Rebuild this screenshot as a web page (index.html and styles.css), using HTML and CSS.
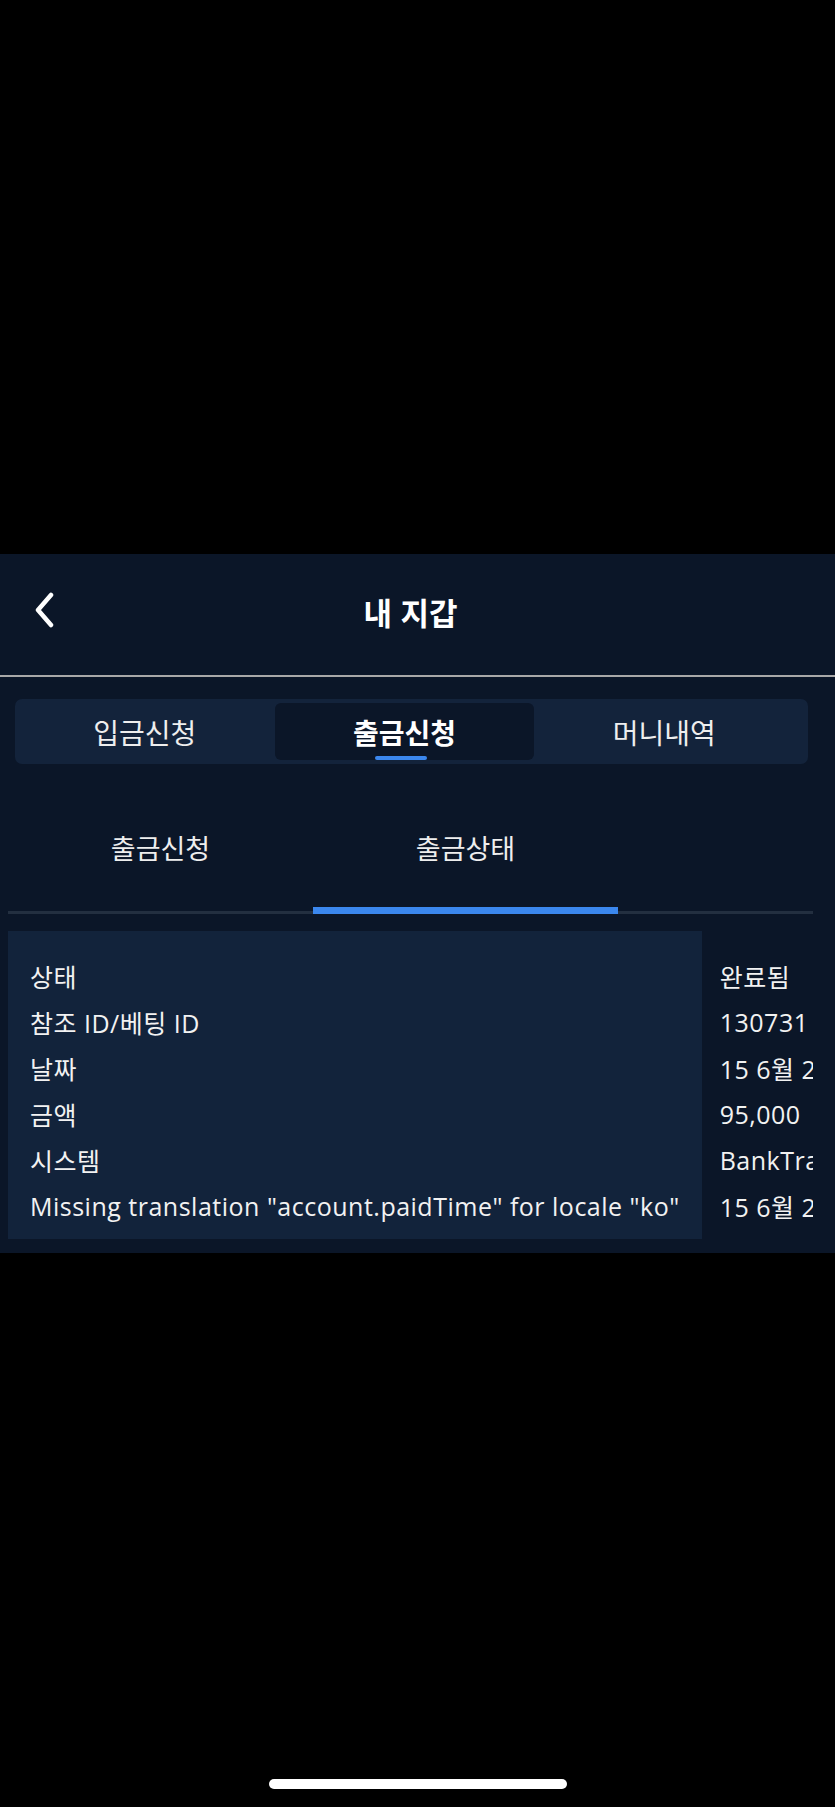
FILE: index.html
```html
<!DOCTYPE html>
<html lang="ko">
<head>
  <meta charset="UTF-8">
  <title>내 지갑</title>
  <meta name="viewport" content="width=device-width, initial-scale=1.0">
  <link rel="stylesheet" href="styles.css">
</head>
<body>
  <div class="status-space"></div>

  <main class="wallet">
    <header class="topbar">
      <button class="back" aria-label="뒤로">
        <svg width="22" height="36" viewBox="0 0 22 36">
          <path d="M18 3 L5 18 L18 33" fill="none" stroke="#fff" stroke-width="4.5" stroke-linecap="round" stroke-linejoin="round"/>
        </svg>
      </button>
      <h1>내 지갑</h1>
    </header>

    <nav class="segment">
      <a class="seg-item">입금신청</a>
      <a class="seg-item active">출금신청</a>
      <a class="seg-item">머니내역</a>
    </nav>

    <div class="subtabs">
      <a class="subtab">출금신청</a>
      <a class="subtab active">출금상태</a>
    </div>

    <div class="detail-wrap">
      <table class="detail">
        <tbody>
          <tr><th>상태</th><td>완료됨</td></tr>
          <tr><th>참조 ID/베팅 ID</th><td>130731</td></tr>
          <tr><th>날짜</th><td>15 6월 2024 14:32</td></tr>
          <tr><th>금액</th><td>95,000</td></tr>
          <tr><th>시스템</th><td>BankTransfer</td></tr>
          <tr><th>Missing translation "account.paidTime" for locale "ko"</th><td>15 6월 2024 14:40</td></tr>
        </tbody>
      </table>
    </div>
  </main>

  <div class="home-indicator"></div>
</body>
</html>
```

FILE: styles.css
```css
html, body {
  margin: 0;
  padding: 0;
  background: #000;
  font-family: "Open Sans", "Noto Sans CJK KR", sans-serif;
  color: #f2f2f2;
  min-height: 1807px;
}
.status-space {
  height: 554px;
}
.wallet {
  background: #0b1628;
  padding-bottom: 14px;
}
.topbar {
  height: 121px;
  display: flex;
  align-items: center;
  justify-content: center;
  position: relative;
  border-bottom: 2px solid #a8a8a8;
}
.topbar h1 {
  margin: 0 0 6px;
  font-family: "Noto Sans CJK KR", sans-serif;
  font-size: 31px;
  font-weight: 700;
  color: #fff;
  transform: translateX(-7px);
}
.back {
  position: absolute;
  left: 33px;
  top: 38px;
  background: none;
  border: none;
  padding: 0;
  cursor: pointer;
}
.segment {
  display: flex;
  margin: 22px 27px 0 15px;
  padding: 4px 14px 4px 0;
  background: #13233b;
  border-radius: 7px;
  height: 57px;
}
.seg-item {
  flex: 1;
  display: flex;
  align-items: center;
  justify-content: center;
  position: relative;
  font-family: "Noto Sans CJK KR", sans-serif;
  font-size: 28px;
  color: #eee;
  border-radius: 6px;
}
.seg-item.active {
  background: #0b1628;
  font-weight: 700;
  color: #fff;
}
.seg-item.active::after {
  content: "";
  position: absolute;
  bottom: 0;
  left: 50%;
  width: 52px;
  height: 4px;
  margin-left: -30px;
  border-radius: 2px;
  background: #3b87ee;
}
.subtabs {
  display: flex;
  margin: 24px 22px 0 8px;
  border-bottom: 3px solid #232f40;
}
.subtab {
  width: 305px;
  height: 119px;
  display: flex;
  align-items: center;
  justify-content: center;
  font-family: "Noto Sans CJK KR", sans-serif;
  font-size: 27px;
  color: #eee;
  border-bottom: 7px solid transparent;
  margin-bottom: -3px;
}
.subtab.active {
  border-bottom-color: #3b87ee;
}
.detail-wrap {
  margin: 17px 22px 0 8px;
  overflow: hidden;
}
.detail {
  border-collapse: collapse;
  font-size: 25px;
  letter-spacing: 0.5px;
}
.detail th {
  background: #12233b;
  font-weight: 400;
  text-align: left;
  white-space: nowrap;
  padding: 0 22px;
  height: 46px;
  color: #f2f2f2;
}
.detail td {
  white-space: nowrap;
  padding: 0 22px 0 18px;
  color: #f2f2f2;
}
.detail tr:first-child th,
.detail tr:first-child td {
  padding-top: 22px;
}
.detail tr:last-child th,
.detail tr:last-child td {
  padding-bottom: 10px;
}
.home-indicator {
  position: absolute;
  left: 269px;
  top: 1779px;
  width: 298px;
  height: 10px;
  border-radius: 5px;
  background: #fff;
}
```
